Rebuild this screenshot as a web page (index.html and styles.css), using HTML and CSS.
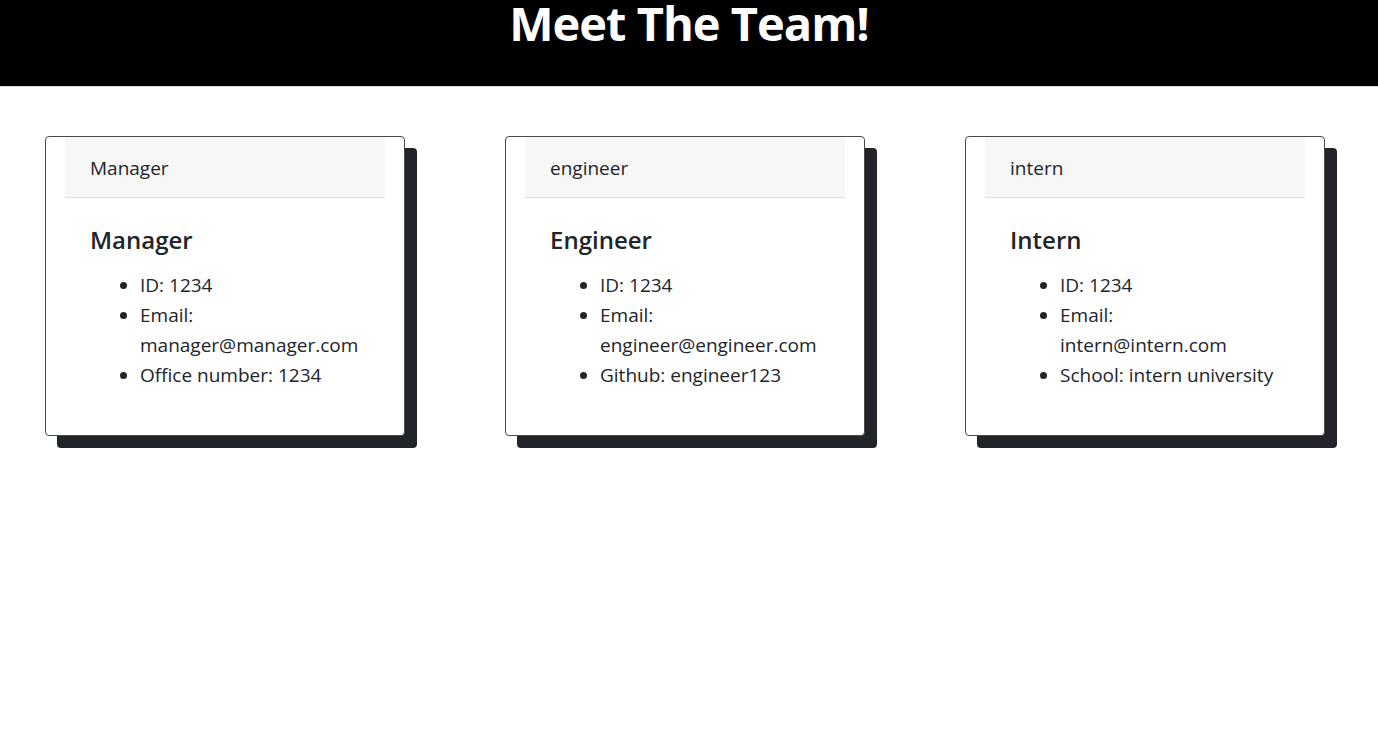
FILE: index.html
```html
<!DOCTYPE html>
<html lang="en">
<head>
<meta charset="UTF-8">
<title>Meet The Team!</title>
<link rel="stylesheet" href="styles.css">
</head>
<body>
<header class="banner">
  <h1 class="banner-title">Meet The Team!</h1>
</header>
<main class="team">
  <section class="card">
    <div class="card-header">Manager</div>
    <div class="card-body">
      <h5 class="card-title">Manager</h5>
      <ul class="card-list">
        <li>ID: 1234</li>
        <li>Email: manager@manager.com</li>
        <li>Office number: 1234</li>
      </ul>
    </div>
  </section>
  <section class="card">
    <div class="card-header">engineer</div>
    <div class="card-body">
      <h5 class="card-title">Engineer</h5>
      <ul class="card-list">
        <li>ID: 1234</li>
        <li>Email: engineer@engineer.com</li>
        <li>Github: engineer123</li>
      </ul>
    </div>
  </section>
  <section class="card">
    <div class="card-header">intern</div>
    <div class="card-body">
      <h5 class="card-title">Intern</h5>
      <ul class="card-list">
        <li>ID: 1234</li>
        <li>Email: intern@intern.com</li>
        <li>School: intern university</li>
      </ul>
    </div>
  </section>
</main>
</body>
</html>
```
FILE: styles.css
```css
html, body {
  margin: 0;
  padding: 0;
}
body {
  min-height: 100vh;
  font-family: "Open Sans", "Noto Sans", sans-serif;
  font-size: 19px;
  line-height: 30px;
  color: #212529;
  background: #fff;
}
.banner {
  background: #000;
  height: 86px;
  border-bottom: 1px solid #d6d6d6;
  display: flex;
  justify-content: center;
  overflow: hidden;
}
.banner-title {
  margin: 0;
  color: #fff;
  font-size: 47px;
  font-weight: 700;
  line-height: 1;
  letter-spacing: -1px;
}
.team {
  display: grid;
  grid-template-columns: repeat(3, 360px);
  column-gap: 100px;
  padding: 49px 0 60px 45px;
  align-items: start;
}
.card {
  border: 1px solid #4a4a4a;
  border-radius: 4px;
  background: #fff;
  padding: 0 19px;
  box-shadow: 12px 12px 0 #212529;
}
.card-header {
  background: #f7f7f7;
  border-bottom: 1px solid #dfdfdf;
  padding: 16px 25px 14px;
}
.card-body {
  padding: 27px 25px 25px;
}
.card-title {
  margin: 0 0 15px;
  font-size: 24px;
  font-weight: 600;
  line-height: 30px;
}
.card-list {
  margin: 0 0 20px;
  padding-left: 50px;
}
```
